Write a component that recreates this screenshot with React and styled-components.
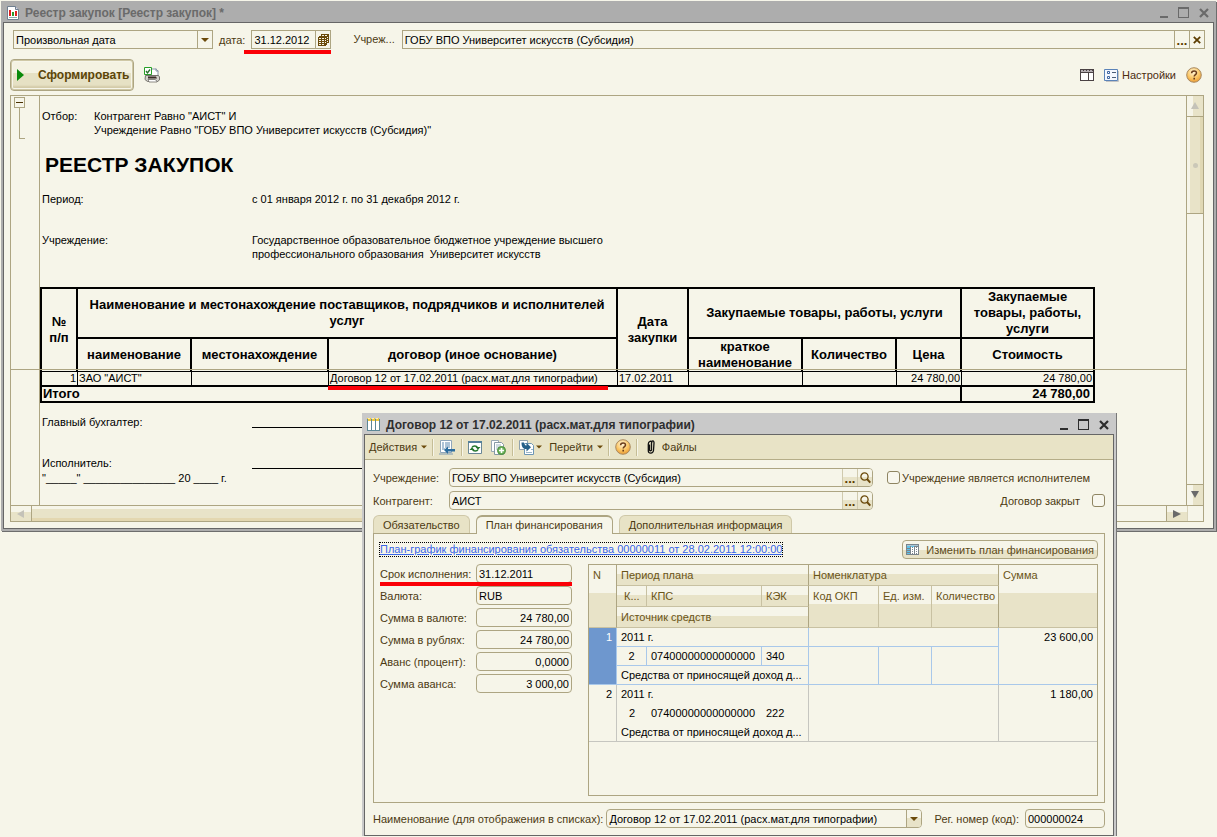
import styled, { createGlobalStyle, css } from "styled-components";

const GlobalStyle = createGlobalStyle`
  * {
    box-sizing: border-box;
  }
  body {
    margin: 0;
    background: #f6f5e9;
    color: #000;
    font-family: "Liberation Sans", Arial, sans-serif;
    font-size: 11px;
    line-height: 14px;
  }
  button, input, select {
    font: inherit;
    color: inherit;
    margin: 0;
    padding: 0;
    border: 0;
    border-radius: 0;
    background: none;
    outline: none;
  }
`;

const planRows = [
  { n: 1, period: "2011 г.", k: "2", kps: "07400000000000000", kek: "340", sum: "23 600,00", active: true },
  { n: 2, period: "2011 г.", k: "2", kps: "07400000000000000", kek: "222", sum: "1 180,00", active: false },
];

const amounts = [
  { id: "currency", label: "Валюта:", value: "RUB" },
  { id: "sumCur", label: "Сумма в валюте:", value: "24 780,00", right: true },
  { id: "sumRub", label: "Сумма в рублях:", value: "24 780,00", right: true },
  { id: "prepay", label: "Аванс (процент):", value: "0,0000", right: true },
  { id: "prepaySum", label: "Сумма аванса:", value: "3 000,00", right: true },
];

/* icons */

const ReportIcon = () => (
  <svg width="12" height="14" viewBox="0 0 12 14">
    <path d="M.5.5h8l3 3v10H.5z" fill="#fff" stroke="#6f7f8f" />
    <path d="M8.5.5v3h3" fill="#dde" stroke="#6f7f8f" />
    <path d="M2 4h2v6H2z" fill="#e02020" />
    <path d="M5 6h2v4H5z" fill="#2c9a2c" />
    <path d="M8 5h2v5H8z" fill="#e02020" />
    <path d="M2 11h8v1H2z" fill="#8aa" />
  </svg>
);

const ContractIcon = () => (
  <svg width="13" height="13" viewBox="0 0 13 13" shapeRendering="crispEdges">
    <path d="M0 1h1v12H0zM4 1h1v12H4zM8 1h1v12H8zM12 1h1v12h-1zM0 12h13v1H0z" fill="#5d8796" />
    <path d="M1 3h3v9H1zM5 3h3v9H5zM9 3h3v9H9z" fill="#fff" />
    <path d="M0 0h4v3H1V1H0zM5 0h3v3H5zM9 0h3v3H9z" fill="#f0c93e" />
    <path d="M1 0h2v1H1zM5 0h2v1H5zM9 0h2v1H9z" fill="#fff0b0" />
  </svg>
);

const MinimizeIcon = () => (
  <svg width="8" height="12" viewBox="0 0 8 12" fill="currentColor">
    <path d="M0 9h8v2H0z" />
  </svg>
);

const MaximizeIcon = () => (
  <svg width="11" height="12" viewBox="0 0 11 12" fill="none" stroke="currentColor" shapeRendering="crispEdges">
    <path d="M.5.5h10v10H.5z" />
    <path d="M0 1.500h11" />
  </svg>
);

const CloseIcon = ({ size = 10 }) => (
  <svg width={size} height={size} viewBox="0 0 10 10" stroke="currentColor" strokeWidth="2.2">
    <path d="M1 1l8 8M9 1l-8 8" />
  </svg>
);

const ArrowDown = ({ width = 8 }) => (
  <svg width={width} height="4" viewBox="0 0 8 4" fill="#6b4a0b">
    <path d="M0 0h8L4 4z" />
  </svg>
);

const CalendarIcon = () => (
  <svg width="11" height="12" viewBox="0 0 11 12" shapeRendering="crispEdges">
    <path d="M3 0h8v9H9v2H8v1H0V3h1V2h2z" fill="#6b4a0b" />
    <path
      d="M4 1h2v1H4zM7 1h2v1H7zM1 4h2v1H1zM4 4h2v1H4zM7 4h1v1H7zM1 6h2v1H1zM4 6h2v1H4zM7 6h1v1H7zM1 8h2v1H1zM4 8h2v1H4zM7 8h1v1H7zM1 10h2v1H1zM4 10h2v1H4zM9 3h1v1H9zM9 5h1v1H9zM9 7h1v1H9z"
      fill="#f6f5e9"
    />
  </svg>
);

const PlayIcon = () => (
  <svg width="7" height="12" viewBox="0 0 7 12">
    <path d="M0 0l7 6-7 6z" fill="#0a8a0a" />
  </svg>
);

const PrintIcon = () => (
  <svg width="16" height="16" viewBox="0 0 16 16">
    <path d="M7 2h5l2 2v6H7z" fill="#fff" stroke="#8a97a8" />
    <path d="M12 1.500V4h2.500" fill="none" stroke="#8a97a8" />
    <path d="M1.500 8.500h13l1 1.500v3l-2 1.500h-10L1 12.500z" fill="#d3d1cb" stroke="#74726c" />
    <path d="M4 9.500h8l1 2H4z" fill="#3c2e2a" />
    <path d="M4 12.500h7l2 1.500v1H5z" fill="#fff" stroke="#5f5c58" strokeWidth=".7" />
    <path d="M.5.5h7v7h-7z" fill="#fff" stroke="#28a028" />
    <path d="M2 4l1.500 2L6 2.500" fill="none" stroke="#2b6e2b" strokeWidth="1.3" />
  </svg>
);

const GridIcon = () => (
  <svg width="14" height="12" viewBox="0 0 14 12" shapeRendering="crispEdges">
    <path d="M.5.5h13v11H.5z" fill="#fff" stroke="#4a4244" />
    <path d="M1 1h12v2H1z" fill="#b4aeb2" />
    <path d="M3 1h1v1H3zM6 1h1v1H6zM9 1h1v1H9zM12 1h1v1h-1zM1 3h12v1H1zM8 4h1v7H8z" fill="#4a4244" />
  </svg>
);

const SettingsIcon = () => (
  <svg width="15" height="13" viewBox="0 0 15 13">
    <path d="M.5.5h13v11H.5z" fill="#f4f8ff" stroke="#5b83b8" />
    <path d="M14.500 2v10.500H2" fill="none" stroke="#c3c3c3" />
    <path d="M3.500 2.500h2v2h-2zM3.500 7.500h2v2h-2z" fill="#fff" stroke="#3c64a0" />
    <path d="M8 3.500h4M8 8.500h4" stroke="#4b5d78" />
  </svg>
);

const HelpIcon = () => (
  <svg width="16" height="16" viewBox="0 0 16 16">
    <defs>
      <radialGradient id="helpFill" cx=".45" cy=".3" r=".75">
        <stop offset="0" stopColor="#fff6dc" />
        <stop offset=".55" stopColor="#fbc766" />
        <stop offset="1" stopColor="#e8942c" />
      </radialGradient>
    </defs>
    <circle cx="8" cy="8" r="7.3" fill="url(#helpFill)" stroke="#a98a62" />
    <path d="M5.6 6.200c0-3 4.900-3 4.900-.3 0 1.700-2.300 1.600-2.300 3.600" fill="none" stroke="#6b3d1b" strokeWidth="1.5" />
    <path d="M7.400 10.800h1.600v1.600H7.400z" fill="#6b3d1b" />
  </svg>
);

const LoupeIcon = () => (
  <svg width="11" height="12" viewBox="0 0 11 12" fill="none" stroke="#6b4a0b">
    <circle cx="4.5" cy="4.5" r="3.6" strokeWidth="1.3" />
    <path d="M7 7l3.300 3.600" strokeWidth="2" />
  </svg>
);

const SaveListIcon = () => (
  <svg width="16" height="15" viewBox="0 0 16 15">
    <path d="M1.500.5h11v12h-11z" fill="#fff" stroke="#8fa6bb" />
    <path d="M3 3h2M6 3h5M3 5h2M6 5h5M3 7h2M6 7h5M3 9h3" stroke="#5c87ae" />
    <path d="M0 14h14" stroke="#7f9bb3" />
    <path d="M5 10l4-3.500V9h7v2.500H9V14z" fill="#2b6c9e" />
  </svg>
);

const RefreshIcon = () => (
  <svg width="14" height="13" viewBox="0 0 14 13">
    <path d="M.5.5h13v12H.5z" fill="#fff" stroke="#6a8796" />
    <path d="M0 0h14v2H0z" fill="#54809a" />
    <path d="M4 6.500c1-2 4.500-2 5.500 0" fill="none" stroke="#23762b" strokeWidth="1.6" />
    <path d="M10 8.500c-1 2-4.500 2-5.500 0" fill="none" stroke="#23762b" strokeWidth="1.6" />
    <path d="M7.500 6h5L10 8.800zM1.500 9h5L4 6.200z" fill="#23762b" />
  </svg>
);

const CopyIcon = () => (
  <svg width="15" height="15" viewBox="0 0 15 15">
    <path d="M.5.5h7v11h-7z" fill="#fff" stroke="#9aa9b5" />
    <path d="M3.500 2.500h7l2 2v10h-9z" fill="#fff" stroke="#8698a6" />
    <path d="M5 5h5M5 7h4M5 9h2" stroke="#9fb4c4" />
    <circle cx="10.5" cy="10.5" r="4" fill="#6bb35b" stroke="#4b8c3d" />
    <path d="M10.500 8v5M8 10.500h5" stroke="#fff" strokeWidth="1.6" />
  </svg>
);

const GotoIcon = () => (
  <svg width="16" height="15" viewBox="0 0 16 15">
    <path d="M.5.5h8v9h-8z" fill="#fff" stroke="#8fa1ad" />
    <path d="M5.500 3.500h7l2 2v9h-9z" fill="#fff" stroke="#6d96b5" />
    <path d="M7 12.500h6M12 9.500h2" stroke="#9bb6c9" />
    <path d="M2.500 2.500h2.500c0 2 .5 3 2.500 3V2.800l4.500 4.400-4.500 4.300V9C4 9 2.500 7 2.500 2.500z" fill="#245f88" />
  </svg>
);

const ClipIcon = () => (
  <svg width="8" height="14" viewBox="0 0 8 14" fill="none" stroke="#111" strokeWidth="1.3">
    <path d="M2.500 4.500v5.500c0 1 2 1 2 0V3c0-3 2.800-2.600 2.500 0l-.5 7.500c-.5 3.500-5 3.300-5.200.5V4c0-3 3.200-3.600 4-1.500" />
  </svg>
);

const PlanIcon = () => (
  <svg width="13" height="11" viewBox="0 0 13 11" shapeRendering="crispEdges">
    <path d="M0 0h13v11H0z" fill="#7b858c" />
    <path d="M1 1h11v1H1z" fill="#a9c7d8" />
    <path d="M1 2h3v2H1zM1 5h3v1H1zM1 7h3v1H1zM1 9h3v1H1zM5 2h3v1H5z" fill="#5ec3ea" />
    <path
      d="M5 3h1v7H5zM7 3h1v7H7zM9 3h1v7H9zM11 3h1v7h-1zM6 4h1v1H6zM6 6h1v1H6zM6 8h1v1H6zM10 4h1v1h-1zM10 6h1v1h-1zM10 8h1v1h-1z"
      fill="#fff"
    />
  </svg>
);

const triangles = { up: "M4 0l4 7H0z", down: "M0 0h8L4 7z", left: "M7 0v8L0 4z", right: "M0 0l8 4-8 4z" };

const Triangle = ({ dir, muted }) => (
  <svg width="8" height="8" viewBox="0 0 8 8" fill={muted ? "#c4c2b8" : "#6a6a6a"}>
    <path d={triangles[dir]} />
  </svg>
);

/* windows */

const Desktop = styled.main`
  position: relative;
  height: 100vh;
  overflow: hidden;
  padding: 1px 1px 0;
`;

const MainWindow = styled.section`
  border: solid #adadad;
  border-width: 0 2px 2px;
  background: #adadad;
  box-shadow: 1px 1px 0 #6d6d6d;
`;

const DialogWindow = styled.section`
  position: absolute;
  left: 362px;
  top: 413px;
  width: 754px;
  border: solid #c9c9c9;
  border-width: 0 2px;
  background: #c9c9c9;
  box-shadow: 1px 0 0 #777;
`;

const TitleBar = styled.header`
  display: flex;
  align-items: center;
  gap: 6px;
  height: 21px;
  padding: 2px 5px 0 ${(p) => (p.$active ? 3 : 4)}px;
  color: ${(p) => (p.$active ? "#2e2e2e" : "#6a6a6a")};

  h1 {
    flex: 1;
    margin: 0;
    font-size: 12px;
    font-weight: bold;
    white-space: nowrap;
  }
`;

const WindowButtons = styled.div`
  display: flex;
  align-items: center;
  gap: 10px;

  button {
    display: flex;
  }
`;

const Client = styled.div`
  border: 1px solid #666;
  background: #f6f5e9;
`;

/* fields */

const Label = styled.label`
  color: #4c3a12;
  white-space: nowrap;
`;

const FieldBox = styled.div`
  position: relative;
  display: flex;
  flex: ${(p) => (p.$width ? "none" : 1)};
  width: ${(p) => (p.$width ? p.$width + "px" : "auto")};
  height: 19px;
  border: 1px solid #ada582;
  border-radius: ${(p) => (p.$round ? 4 : 0)}px;
  background: #f6f5e9;
  overflow: hidden;

  input, select {
    flex: 1;
    min-width: 0;
    width: 100%;
    appearance: none;
    padding: 0 2px;
    text-align: ${(p) => (p.$right ? "right" : "left")};
  }
`;

const FieldButton = styled.button`
  display: flex;
  align-items: ${(p) => (p.$dots ? "flex-end" : "center")};
  justify-content: center;
  width: 15px;
  border-left: 1px solid ${(p) => (p.$glossy ? "#d0caae" : "#ada582")};
  background: ${(p) => (p.$glossy ? "linear-gradient(#f6f5e9 45%, #e8e3c8 45%)" : "none")};
  color: #5c3c00;
  font-size: 13px;
  font-weight: bold;
`;

const SelectArrow = styled.span`
  position: absolute;
  top: 0;
  right: 0;
  bottom: 0;
  width: 15px;
  display: flex;
  align-items: center;
  justify-content: center;
  border-left: 1px solid #ada582;
  background: ${(p) => (p.$glossy ? "linear-gradient(#f6f5e9 45%, #e8e3c8 45%)" : "none")};
  pointer-events: none;
`;

const Marked = styled.div`
  position: relative;
  display: flex;
  align-items: center;

  &::after {
    content: "";
    position: absolute;
    left: ${(p) => p.$left || 0}px;
    right: ${(p) => p.$right || 0}px;
    top: ${(p) => p.$top}px;
    height: 4px;
    background: #fb0007;
  }
`;

/* report window */

const FilterRow = styled.div`
  display: flex;
  align-items: center;
  padding: 7px 8px 0 9px;

  ${Label} {
    padding: 0 6px;
  }
  ${Label}.org {
    padding: 0 7px 2px 22px;
  }
`;

const CommandRow = styled.div`
  display: flex;
  align-items: center;
  gap: 10px;
  padding: 10px 11px 4px 6px;
`;

const Spacer = styled.div`
  flex: 1;
`;

const RunButton = styled.button`
  display: flex;
  align-items: center;
  gap: 14px;
  height: 32px;
  padding: 0 4px 0 6px;
  border: 1px solid #ada582;
  border-radius: 4px;
  background: linear-gradient(#f4f2e2 42%, #e6e1c4 42%);
  box-shadow: inset 0 0 0 1px #cfc8a6, inset 0 0 0 2px #f6f5e9, inset 0 -4px 2px #d3cba8;
  color: #5c4508;
  font-size: 12px;
  font-weight: bold;
`;

const PlainButton = styled.button`
  display: flex;
  align-items: center;
  gap: 3px;
  color: #4c2c10;
`;

const ReportView = styled.div`
  display: grid;
  grid-template-columns: 28px 1fr 17px;
  position: relative;
  margin: 0 9px 6px 6px;
  border: 1px solid #ada582;
`;

const Gutter = styled.div`
  padding: 1px 0 0 3px;
`;

const Collapse = styled.button`
  display: block;
  position: relative;
  width: 11px;
  height: 11px;
  border: 1px solid #ada582;
  background: linear-gradient(#4a3000, #4a3000) center / 7px 1px no-repeat;

  &::after {
    content: "";
    position: absolute;
    left: 4px;
    top: 10px;
    width: 5px;
    height: 30px;
    border: solid #ada582;
    border-width: 0 0 1px 1px;
  }
`;

const Paper = styled.article`
  border-left: 1px solid #ada582;
  padding-top: 13px;
  overflow: hidden;
  white-space: nowrap;

  h2 {
    margin: 16px 0 15px 5px;
    font-size: 21px;
    line-height: 24px;
  }
`;

const Requisite = styled.div`
  display: grid;
  grid-template-columns: ${(p) => (p.$narrow ? 52 : 210)}px 1fr;
  margin-bottom: ${(p) => p.$after || 0}px;
  padding-left: 2px;
`;

const SignLine = styled.span`
  width: 240px;
  height: 13px;
  border-bottom: 1px solid #000;
`;

const FreezeLine = styled.div`
  position: absolute;
  left: 0;
  right: 16px;
  top: 273px;
  border-top: 1px solid #ada582;
`;

const RegistryTable = styled.table`
  width: 1055px;
  table-layout: fixed;
  border-spacing: 0;
  border: solid #000;
  border-width: 2px 0 0 2px;
  margin-bottom: 12px;

  th, td {
    padding: 0 2px;
    border: solid #000;
    border-width: 0 2px 2px 0;
    white-space: normal;
  }
  th {
    font-size: 13px;
    line-height: 16px;
  }
  th.low {
    border-bottom-width: 1px;
  }
  tbody td {
    height: 15px;
    padding: 0 1px;
    line-height: 13px;
    border-right-width: 1px;
    white-space: nowrap;
  }
  tbody td:last-child {
    border-right-width: 2px;
  }
  tfoot td {
    height: 16px;
    padding: 0 3px 0 1px;
    font-size: 13px;
    font-weight: bold;
    line-height: 14px;
  }
  .num {
    text-align: right;
  }
`;

const HeadRow = styled.tr`
  height: ${(p) => p.$height}px;
`;

const VScroll = styled.div`
  display: flex;
  flex-direction: column;
  border-left: 1px solid #ada582;
`;

const HScroll = styled.div`
  grid-column: 1 / -1;
  display: flex;
  height: 16px;
  border-top: 1px solid #ada582;
`;

const ScrollButton = styled.button`
  display: flex;
  align-items: center;
  justify-content: center;
  flex: none;
  ${(p) =>
    p.$vertical
      ? css`
          height: 21px;
          border-${p.$end ? "top" : "bottom"}: 1px solid #ada582;
          background: linear-gradient(90deg, #f6f5e9 40%, #e8e3c8 40%);
        `
      : css`
          width: 21px;
          border-${p.$end ? "left" : "right"}: 1px solid #ada582;
          background: linear-gradient(#f6f5e9 40%, #e8e3c8 40%);
        `}
`;

const Thumb = styled.div`
  display: flex;
  align-items: center;
  justify-content: center;
  ${(p) =>
    p.$vertical
      ? css`
          height: 97px;
          border-bottom: 1px solid #ada582;
          background: linear-gradient(90deg, #f6f5e9 3px, #e8e3c8 3px 13px, #e0d8b4 13px);
        `
      : css`
          flex: 0 1 70%;
          border-right: 1px solid #ada582;
          background: linear-gradient(#f6f5e9 3px, #e8e3c8 3px 12px, #e3d7b0 12px);
        `}

  i {
    width: 5px;
    height: 5px;
    border-radius: 3px;
    background: #cbc8b8;
  }
`;

const Corner = styled.div`
  width: 16px;
  border-left: 1px solid #d8d3ba;
`;

/* contract window */

const Toolbar = styled.nav`
  display: flex;
  align-items: center;
  height: 25px;
  padding: 0 4px;
  border-bottom: 1px solid #b5ad88;
  background: #e8e3c6;
`;

const ToolButton = styled.button`
  display: flex;
  align-items: center;
  gap: ${(p) => p.$gap || 4}px;
  margin-right: ${(p) => p.$after || 0}px;
  color: #4c3a12;

  &:last-child {
    margin-left: 4px;
  }
`;

const Separator = styled.span`
  width: 2px;
  height: 17px;
  margin: 0 5px;
  border-left: 1px solid #c5bd96;
  border-right: 1px solid #f6f5e9;
`;

const Form = styled.div`
  padding: 8px 8px 7px;
`;

const FormHead = styled.div`
  display: grid;
  grid-template-columns: 76px 424px 1fr;
  row-gap: 4px;
  align-items: center;
`;

const Check = styled.label`
  display: flex;
  align-items: center;
  justify-content: ${(p) => (p.$end ? "flex-end" : "flex-start")};
  gap: ${(p) => (p.$end ? 12 : 2)}px;
  padding-left: 14px;
  color: #4c3a12;
  white-space: nowrap;

  input {
    appearance: none;
    width: 13px;
    height: 13px;
    border: 1px solid #8f8562;
    border-radius: 3px;
    background: #f8f7ee;
  }
`;

const Tabs = styled.div`
  display: flex;
  align-items: flex-end;
  gap: 6px;
  margin-top: 5px;
`;

const Tab = styled.button`
  position: relative;
  height: ${(p) => (p.$active ? 19 : 18)}px;
  padding: 0 9px ${(p) => (p.$active ? 2 : 0)}px;
  margin-bottom: ${(p) => (p.$active ? -1 : 0)}px;
  border: 1px solid ${(p) => (p.$active ? "#ada582" : "#cfc8a8")};
  border-top-width: ${(p) => (p.$active ? 2 : 1)}px;
  border-bottom: 0;
  border-radius: 6px 6px 0 0;
  background: ${(p) => (p.$active ? "#f6f5e9" : "#e8e3c6")};
  color: #4c3a12;
`;

const TabPanel = styled.div`
  padding: 6px;
  border: 1px solid #ada582;
`;

const PanelHead = styled.div`
  display: flex;
  align-items: center;
  justify-content: space-between;
  margin-bottom: 5px;
`;

const PlanLink = styled.a`
  outline: 1px dotted #000;
  color: #3a66e8;
  line-height: 13px;
`;

const PlanButton = styled.button`
  display: flex;
  align-items: center;
  gap: 7px;
  height: 19px;
  padding: 0 3px;
  border: 1px solid #ada582;
  border-radius: 4px;
  background: linear-gradient(#f6f5e9 50%, #e8e3c8 50%);
  color: #5c4a18;
`;

const PanelBody = styled.div`
  display: grid;
  grid-template-columns: 192px 1fr;
  gap: 16px;
`;

const Amounts = styled.div`
  display: flex;
  flex-direction: column;
  gap: 3px;
`;

const AmountRow = styled.div`
  display: flex;
  align-items: center;

  ${Label} {
    flex: 1;
  }
`;

const PlanBox = styled.div`
  min-height: 232px;
  border: 1px solid #ada582;
`;

const PlanTable = styled.table`
  width: 100%;
  table-layout: fixed;
  border-spacing: 0;

  th, td {
    padding: 0 4px;
    white-space: nowrap;
    overflow: hidden;
    line-height: 14px;
  }
  th {
    height: 21px;
    padding-top: 3px;
    border: solid #c8c1a2;
    border-width: 0 1px 1px 0;
    background: linear-gradient(#f6f5e9 45%, #e8e3c8 45%);
    color: #6a5417;
    font-weight: normal;
    text-align: left;
    vertical-align: top;
  }
  th.major {
    border-right-color: #ada582;
  }
  th.end {
    border-right: 0;
  }
  td {
    padding-top: 2px;
    vertical-align: top;
  }
`;

const PlanCell = styled.td`
  height: 19px;
  border: solid ${(p) => (p.$active ? "#a9c8ea" : "#c6c6c0")};
  border-width: 0 ${(p) => (p.$noRight ? 0 : 1)}px ${(p) => (p.$noBottom ? 0 : 1)}px 0;
  text-align: ${(p) => p.$align || "left"};
  ${(p) => p.$marker && "background: #6e97ce; color: #fff;"}
`;

const Footer = styled.div`
  display: flex;
  align-items: center;
  gap: 3px;
  padding-top: 6px;

  ${Label}.code {
    padding: 0 3px 0 10px;
  }
`;

function PlanGroup({ row }) {
  const a = row.active;
  return (
    <tbody>
      <tr>
        <PlanCell rowSpan={3} $active={a} $align="right" $marker={a}>{row.n}</PlanCell>
        <PlanCell colSpan={3} $active={a} $noBottom={!a}>{row.period}</PlanCell>
        <PlanCell colSpan={3} $active={a} $noBottom={!a} />
        <PlanCell rowSpan={3} $active={a} $align="right" $noRight>{row.sum}</PlanCell>
      </tr>
      <tr>
        <PlanCell $active={a} $noBottom={!a} $noRight={!a} $align="center">{row.k}</PlanCell>
        <PlanCell $active={a} $noBottom={!a} $noRight={!a}>{row.kps}</PlanCell>
        <PlanCell $active={a} $noBottom={!a}>{row.kek}</PlanCell>
        <PlanCell rowSpan={2} $active={a} $noRight={!a} />
        <PlanCell rowSpan={2} $active={a} $noRight={!a} />
        <PlanCell rowSpan={2} $active={a} />
      </tr>
      <tr>
        <PlanCell colSpan={3} $active={a}>Средства от приносящей доход д...</PlanCell>
      </tr>
    </tbody>
  );
}

function Controls() {
  return (
    <WindowButtons>
      <button aria-label="Свернуть"><MinimizeIcon /></button>
      <button aria-label="Развернуть"><MaximizeIcon /></button>
      <button aria-label="Закрыть"><CloseIcon /></button>
    </WindowButtons>
  );
}

function ReportWindow() {
  return (
    <MainWindow>
      <TitleBar>
        <ReportIcon />
        <h1>Реестр закупок [Реестр закупок] *</h1>
        <Controls />
      </TitleBar>
      <Client>
        <FilterRow>
          <FieldBox $width={200}>
            <select aria-label="Вид периода">
              <option>Произвольная дата</option>
            </select>
            <SelectArrow><ArrowDown /></SelectArrow>
          </FieldBox>
          <Label htmlFor="date">дата:</Label>
          <Marked $top={20} $left={-7}>
            <FieldBox $width={80}>
              <input id="date" defaultValue="31.12.2012" />
              <FieldButton aria-label="Календарь"><CalendarIcon /></FieldButton>
            </FieldBox>
          </Marked>
          <Label className="org" htmlFor="org">Учреж...</Label>
          <FieldBox>
            <input id="org" defaultValue="ГОБУ ВПО Университет искусств (Субсидия)" />
            <FieldButton $dots aria-label="Выбрать">...</FieldButton>
            <FieldButton aria-label="Очистить"><CloseIcon size={8} /></FieldButton>
          </FieldBox>
        </FilterRow>
        <CommandRow>
          <RunButton><PlayIcon />Сформировать</RunButton>
          <PlainButton aria-label="Печать"><PrintIcon /></PlainButton>
          <Spacer />
          <PlainButton aria-label="Колонки"><GridIcon /></PlainButton>
          <PlainButton><SettingsIcon />Настройки</PlainButton>
          <PlainButton aria-label="Справка"><HelpIcon /></PlainButton>
        </CommandRow>
        <ReportView>
          <Gutter><Collapse aria-label="Свернуть группу" /></Gutter>
          <Paper>
            <Requisite $narrow>
              <span>Отбор:</span>
              <span>Контрагент Равно "АИСТ" И<br />Учреждение Равно "ГОБУ ВПО Университет искусств (Субсидия)"</span>
            </Requisite>
            <h2>РЕЕСТР ЗАКУПОК</h2>
            <Requisite $after={27}>
              <span>Период:</span>
              <span>с 01 января 2012 г. по 31 декабря 2012 г.</span>
            </Requisite>
            <Requisite $after={26}>
              <span>Учреждение:</span>
              <span>
                Государственное образовательное бюджетное учреждение высшего<br />
                профессионального образования&nbsp; Университет искусств
              </span>
            </Requisite>
            <RegistryTable>
              <colgroup>
                {[36, 114, 137, 289, 71, 114, 94, 65, 133].map((w, i) => (
                  <col key={i} width={w} />
                ))}
              </colgroup>
              <thead>
                <HeadRow $height={49}>
                  <th className="low" rowSpan={2}>№<br />п/п</th>
                  <th colSpan={3}>Наименование и местонахождение поставщиков, подрядчиков и исполнителей услуг</th>
                  <th className="low" rowSpan={2}>Дата закупки</th>
                  <th colSpan={3}>Закупаемые товары, работы, услуги</th>
                  <th>Закупаемые товары, работы, услуги</th>
                </HeadRow>
                <HeadRow $height={33}>
                  <th className="low">наименование</th>
                  <th className="low">местонахождение</th>
                  <th className="low">договор (иное основание)</th>
                  <th className="low">краткое наименование</th>
                  <th className="low">Количество</th>
                  <th className="low">Цена</th>
                  <th className="low">Стоимость</th>
                </HeadRow>
              </thead>
              <tbody>
                <tr>
                  <td className="num">1</td>
                  <td>ЗАО "АИСТ"</td>
                  <td />
                  <td>
                    <Marked $top={14} $left={-2} $right={8}>Договор 12 от 17.02.2011 (расх.мат.для типографии)</Marked>
                  </td>
                  <td>17.02.2011</td>
                  <td />
                  <td />
                  <td className="num">24 780,00</td>
                  <td className="num">24 780,00</td>
                </tr>
              </tbody>
              <tfoot>
                <tr>
                  <td colSpan={8}>Итого</td>
                  <td className="num">24 780,00</td>
                </tr>
              </tfoot>
            </RegistryTable>
            <Requisite $after={27}>
              <span>Главный бухгалтер:</span>
              <SignLine />
            </Requisite>
            <Requisite $after={1}>
              <span>Исполнитель:</span>
              <SignLine />
            </Requisite>
            <Requisite $after={20}>
              <span>"_____" _______________ 20 ____ г.</span>
            </Requisite>
          </Paper>
          <VScroll>
            <ScrollButton $vertical aria-label="Вверх"><Triangle dir="up" muted /></ScrollButton>
            <Thumb $vertical><i /></Thumb>
            <Spacer />
            <ScrollButton $vertical $end aria-label="Вниз"><Triangle dir="down" /></ScrollButton>
          </VScroll>
          <HScroll>
            <ScrollButton aria-label="Влево"><Triangle dir="left" muted /></ScrollButton>
            <Thumb />
            <Spacer />
            <ScrollButton $end aria-label="Вправо"><Triangle dir="right" /></ScrollButton>
            <Corner />
          </HScroll>
          <FreezeLine />
        </ReportView>
      </Client>
    </MainWindow>
  );
}

function ContractWindow() {
  return (
    <DialogWindow>
      <TitleBar $active>
        <ContractIcon />
        <h1>Договор 12 от 17.02.2011 (расх.мат.для типографии)</h1>
        <Controls />
      </TitleBar>
      <Client>
        <Toolbar>
          <ToolButton>Действия<ArrowDown width={6} /></ToolButton>
          <Separator />
          <ToolButton aria-label="Записать" $after={1}><SaveListIcon /></ToolButton>
          <Separator />
          <ToolButton aria-label="Перечитать" $after={9}><RefreshIcon /></ToolButton>
          <ToolButton aria-label="Скопировать" $after={1}><CopyIcon /></ToolButton>
          <Separator />
          <ToolButton aria-label="Ввести на основании" $gap={1} $after={7}><GotoIcon /><ArrowDown width={6} /></ToolButton>
          <ToolButton>Перейти<ArrowDown width={6} /></ToolButton>
          <Separator />
          <ToolButton aria-label="Справка"><HelpIcon /></ToolButton>
          <Separator />
          <ToolButton $gap={7}><ClipIcon />Файлы</ToolButton>
        </Toolbar>
        <Form>
          <FormHead>
            <Label htmlFor="institution">Учреждение:</Label>
            <FieldBox $round>
              <input id="institution" defaultValue="ГОБУ ВПО Университет искусств (Субсидия)" />
              <FieldButton $glossy $dots aria-label="Выбрать">...</FieldButton>
              <FieldButton $glossy aria-label="Открыть"><LoupeIcon /></FieldButton>
            </FieldBox>
            <Check><input type="checkbox" />Учреждение является исполнителем</Check>
            <Label htmlFor="partner">Контрагент:</Label>
            <FieldBox $round>
              <input id="partner" defaultValue="АИСТ" />
              <FieldButton $glossy $dots aria-label="Выбрать">...</FieldButton>
              <FieldButton $glossy aria-label="Открыть"><LoupeIcon /></FieldButton>
            </FieldBox>
            <Check $end>Договор закрыт<input type="checkbox" /></Check>
          </FormHead>
          <Tabs role="tablist">
            <Tab role="tab">Обязательство</Tab>
            <Tab role="tab" $active aria-selected="true">План финансирования</Tab>
            <Tab role="tab">Дополнительная информация</Tab>
          </Tabs>
          <TabPanel>
            <PanelHead>
              <PlanLink href="#plan">План-график финансирования обязательства 00000011 от 28.02.2011 12:00:00</PlanLink>
              <PlanButton><PlanIcon />Изменить план финансирования</PlanButton>
            </PanelHead>
            <PanelBody>
              <Amounts>
                <Marked $top={18}>
                  <Label htmlFor="term">Срок исполнения:</Label>
                  <Spacer />
                  <FieldBox $round $width={96}>
                    <input id="term" defaultValue="31.12.2011" />
                  </FieldBox>
                </Marked>
                {amounts.map((f) => (
                  <AmountRow key={f.id}>
                    <Label htmlFor={f.id}>{f.label}</Label>
                    <FieldBox $round $width={96} $right={f.right}>
                      <input id={f.id} defaultValue={f.value} />
                    </FieldBox>
                  </AmountRow>
                ))}
              </Amounts>
              <PlanBox>
                <PlanTable>
                  <colgroup>
                    {[28, 30, 115, 47, 70, 53, 67].map((w, i) => (
                      <col key={i} width={w} />
                    ))}
                    <col />
                  </colgroup>
                  <thead>
                    <tr>
                      <th className="major" rowSpan={3}>N</th>
                      <th className="major" colSpan={3}>Период плана</th>
                      <th className="major" colSpan={3}>Номенклатура</th>
                      <th className="end" rowSpan={3}>Сумма</th>
                    </tr>
                    <tr>
                      <th>&nbsp;К...</th>
                      <th>КПС</th>
                      <th className="major">КЭК</th>
                      <th rowSpan={2}>Код ОКП</th>
                      <th rowSpan={2}>Ед. изм.</th>
                      <th className="major" rowSpan={2}>Количество</th>
                    </tr>
                    <tr>
                      <th className="major" colSpan={3}>Источник средств</th>
                    </tr>
                  </thead>
                  {planRows.map((row) => (
                    <PlanGroup key={row.n} row={row} />
                  ))}
                </PlanTable>
              </PlanBox>
            </PanelBody>
          </TabPanel>
          <Footer>
            <Label htmlFor="title">Наименование (для отображения в списках):</Label>
            <FieldBox $round>
              <select id="title">
                <option>Договор 12 от 17.02.2011 (расх.мат.для типографии)</option>
              </select>
              <SelectArrow $glossy><ArrowDown /></SelectArrow>
            </FieldBox>
            <Label className="code" htmlFor="code">Рег. номер (код):</Label>
            <FieldBox $round $width={80}>
              <input id="code" defaultValue="000000024" />
            </FieldBox>
          </Footer>
        </Form>
      </Client>
    </DialogWindow>
  );
}

export default function App() {
  return (
    <Desktop>
      <GlobalStyle />
      <ReportWindow />
      <ContractWindow />
    </Desktop>
  );
}
